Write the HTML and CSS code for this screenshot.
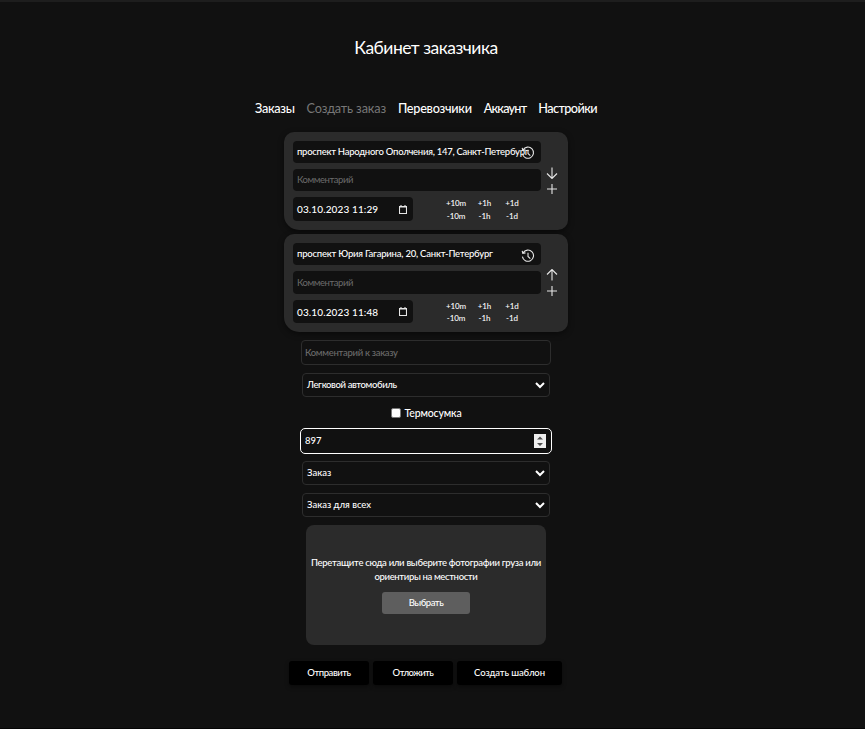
FILE: index.html
```html
<!DOCTYPE html>
<html lang="ru">
<head>
<meta charset="utf-8">
<title>Кабинет заказчика</title>
<link rel="stylesheet" href="styles.css">
</head>
<body>
<main class="page">
  <h1 class="title">Кабинет заказчика</h1>
  <nav class="nav">
    <a class="n1">Заказы</a><a class="n2 current">Создать заказ</a><a class="n3">Перевозчики</a><a class="n4">Аккаунт</a><a class="n5">Настройки</a>
  </nav>

  <section class="stop">
    <div class="fields">
      <div class="field address"><span class="a1">проспект Народного Ополчения, 147, Санкт-Петербург</span>
        <svg class="history" viewBox="0 0 14 14"><path d="M2.1 3.8A5.6 5.6 0 1 1 1.4 7.6M1.2 1.8l.6 2.6 2.7-.5M7 3.8v3.6l2.3 2.2"/></svg>
      </div>
      <div class="field comment">Комментарий</div>
      <div class="row">
        <div class="field date"><span>03.10.2023 11:29</span><svg class="cal" viewBox="0 0 8 9"><path d="M.5 1.5h7v7h-7zM.5 2h7M2 0v2M6 0v2"/></svg></div>
        <div class="steps"><span>+10m</span><span>+1h</span><span>+1d</span><span>-10m</span><span>-1h</span><span>-1d</span></div>
      </div>
    </div>
    <div class="tools">
      <svg viewBox="0 0 12 12"><path d="M6 .5v11M1 6.5l5 5 5-5"/></svg>
      <svg viewBox="0 0 12 12"><path d="M6 1v10M1 6h10"/></svg>
    </div>
  </section>

  <section class="stop second">
    <div class="fields">
      <div class="field address"><span class="a2">проспект Юрия Гагарина, 20, Санкт-Петербург</span>
        <svg class="history" viewBox="0 0 14 14"><path d="M2.1 3.8A5.6 5.6 0 1 1 1.4 7.6M1.2 1.8l.6 2.6 2.7-.5M7 3.8v3.6l2.3 2.2"/></svg>
      </div>
      <div class="field comment">Комментарий</div>
      <div class="row">
        <div class="field date"><span>03.10.2023 11:48</span><svg class="cal" viewBox="0 0 8 9"><path d="M.5 1.5h7v7h-7zM.5 2h7M2 0v2M6 0v2"/></svg></div>
        <div class="steps"><span>+10m</span><span>+1h</span><span>+1d</span><span>-10m</span><span>-1h</span><span>-1d</span></div>
      </div>
    </div>
    <div class="tools">
      <svg viewBox="0 0 12 12"><path d="M6 11.5V.5M1 5.5l5-5 5 5"/></svg>
      <svg viewBox="0 0 12 12"><path d="M6 1v10M1 6h10"/></svg>
    </div>
  </section>

  <div class="box note"><span class="b1">Комментарий к заказу</span></div>
  <div class="box select"><span class="b2">Легковой автомобиль</span><svg class="chev" viewBox="0 0 10 7"><path d="M1 1l4 4 4-4"/></svg></div>
  <label class="check"><i class="tick"></i><span>Термосумка</span></label>
  <div class="box price"><span>897</span><svg class="spin" viewBox="0 0 12 14"><path d="M0 0h12v14H0z" fill="#efefef"/><path d="M3 5.5l3-3 3 3zM3 9l3 3 3-3z" fill="#505050"/></svg></div>
  <div class="box select"><span class="b3">Заказ</span><svg class="chev" viewBox="0 0 10 7"><path d="M1 1l4 4 4-4"/></svg></div>
  <div class="box select"><span class="b4">Заказ для всех</span><svg class="chev" viewBox="0 0 10 7"><path d="M1 1l4 4 4-4"/></svg></div>

  <section class="drop">
    <div class="d1">Перетащите сюда или выберите фотографии груза или</div>
    <div class="d2">ориентиры на местности</div>
    <div class="choose">Выбрать</div>
  </section>

  <div class="actions"><div class="btn send">Отправить</div><div class="btn hold">Отложить</div><div class="btn tpl">Создать шаблон</div></div>
</main>
</body>
</html>
```

FILE: styles.css
```css
* { box-sizing: border-box; }
body {
  margin: 0;
  background: #111;
  color: #fff;
  font: 500 9.5px/14px Lato, "Open Sans", sans-serif;
  white-space: nowrap;
}
.page {
  height: 729px;
  padding-right: 13px;
  border-top: 2px solid #1e1e1e;
  border-bottom: 1px solid #050505;
  display: flex;
  flex-direction: column;
  align-items: center;
}
.title { margin: 34px 0 0; font-size: 17.5px; line-height: 24px; font-weight: 400; letter-spacing: -.5px; }
.nav { display: flex; gap: 12px; margin-top: 38px; height: 20px; font-size: 12.7px; line-height: 20px; }
.n1 { letter-spacing: -.33px; }
.n2 { letter-spacing: -.15px; }
.n3 { letter-spacing: -.27px; }
.n4 { letter-spacing: -.8px; }
.n5 { letter-spacing: -.6px; }
.current { color: #777; font-weight: 400; }

.stop {
  display: flex;
  width: 284px;
  height: 98px;
  margin-top: 14px;
  padding: 9px;
  background: #2b2b2b;
  border-radius: 10px 10px 10px 15px;
  box-shadow: 0 2px 6px rgba(0, 0, 0, .45);
}
.stop.second { margin-top: 4px; }
.fields { width: 248px; }
.field {
  display: flex;
  align-items: center;
  height: 22px;
  padding-left: 4px;
  background: #111;
  border-radius: 4px;
}
.address { position: relative; }
.a1 { letter-spacing: -.27px; }
.a2 { letter-spacing: -.22px; }
.history { position: absolute; right: 6px; top: 5px; width: 14px; height: 14px; }
.second .history { top: 6px; }
svg { fill: none; stroke: #e6e6e6; stroke-width: 1.1; }
.comment { margin: 6px 0; color: #6b6b6b; font-weight: 400; letter-spacing: -.45px; }
.second .comment { height: 23px; }
.row { display: flex; }
.date { width: 120px; height: 24px; justify-content: space-between; padding-right: 6px; font-size: 10px; letter-spacing: .12px; }
.second .date { height: 23px; }
.cal { width: 8px; height: 9px; }
.steps {
  display: grid;
  grid-template-columns: 32px 25px 30px;
  grid-auto-rows: 13px;
  margin-left: 27px;
  text-align: center;
  font-size: 8px;
  line-height: 13px;
  letter-spacing: -.1px;
}
.second .steps { grid-auto-rows: 12px; }
.tools { display: flex; flex-direction: column; gap: 4px; margin: 26px 0 0 5px; }
.tools svg { width: 12px; height: 12px; }

.box {
  display: flex;
  align-items: center;
  justify-content: space-between;
  width: 248px;
  height: 24px;
  padding: 0 4px;
  border: 1px solid #2d2d2d;
  border-radius: 4px;
}
.note { width: 250px; height: 25px; margin: 8px 0; padding-left: 3px; color: #6b6b6b; }
.b1 { letter-spacing: -.3px; }
.b2 { letter-spacing: -.37px; }
.select + .select { margin-top: 8px; }
.chev { width: 10px; height: 7px; stroke: #fff; stroke-width: 2; }
.check { display: flex; align-items: center; gap: 4px; height: 14px; margin: 9px 0 8px; font-size: 10.5px; letter-spacing: -.15px; }
.tick { width: 10px; height: 10px; background: #fff; border: 1px solid #777; border-radius: 2px; }
.price { width: 252px; height: 26px; margin-bottom: 7px; border-color: #fff; border-width: 1.5px; border-radius: 5px; padding-right: 5px; }
.spin { width: 12px; height: 14px; stroke: none; }

.drop {
  width: 240px;
  height: 120px;
  margin-top: 8px;
  padding-top: 31px;
  background: #2b2b2b;
  border-radius: 8px;
  display: flex;
  flex-direction: column;
  align-items: center;
}
.d1 { letter-spacing: -.3px; }
.d2 { letter-spacing: -.36px; }
.choose { width: 88px; height: 22px; margin-top: 8px; background: #5e5e5e; border-radius: 3px; text-align: center; line-height: 22px; letter-spacing: -.5px; }
.actions { display: flex; gap: 4px; margin: 16px 1px 0 0; }
.btn { width: 80px; height: 24px; line-height: 24px; text-align: center; background: #000; border-radius: 3px; box-shadow: 0 2px 4px rgba(0, 0, 0, .4); }
.send { letter-spacing: -.45px; }
.hold { letter-spacing: -.55px; }
.tpl { width: 105px; letter-spacing: -.12px; }
```
